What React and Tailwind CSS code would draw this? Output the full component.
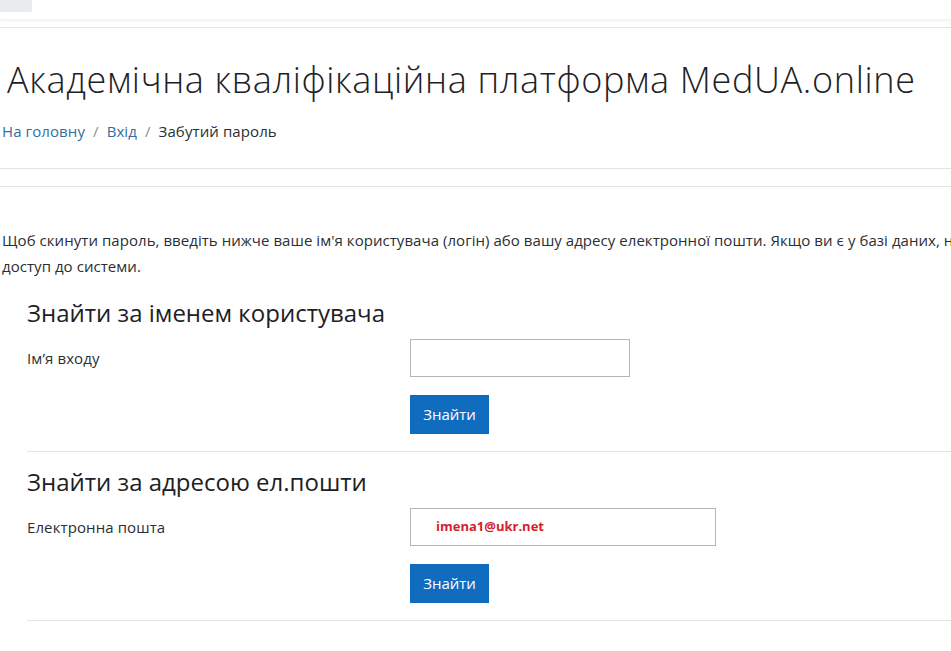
export default function App() {
  return (
    <div className="w-[951px] h-[651px] overflow-hidden bg-white text-[#373a3c]" style={{ fontFamily: '"Open Sans", "Noto Sans", sans-serif' }}>
      {/* top navbar, cut off */}
      <div className="h-[19px] bg-white shadow-[0_2px_3px_rgba(0,0,0,0.06)] flex">
        <div className="w-[32px] h-[12px] bg-[#e9ecef] rounded-br-[2px]" />
      </div>
      <div className="mt-[8px] border-t border-[#e5e5e5]" />

      {/* header */}
      <h1 className="mt-[30px] pl-[7px] text-[36px] leading-[44px] font-light tracking-[0.65px] text-[#1d2125] whitespace-nowrap">
        Академічна кваліфікаційна платформа MedUA.online
      </h1>
      <nav className="mt-[19px] pl-[2px] flex items-center gap-[8px] text-[15px] leading-[20px] tracking-[0.1px] whitespace-nowrap">
        <a className="text-[#2f6fa3]">На головну</a>
        <span className="text-[#8a8f94]">/</span>
        <a className="text-[#2f6fa3]">Вхід</a>
        <span className="text-[#8a8f94]">/</span>
        <span className="text-[#2b2f33]">Забутий пароль</span>
      </nav>
      <div className="mt-[27px] border-t border-[#e3e3e3]" />
      <div className="mt-[17px] border-t border-[#e3e3e3]" />

      {/* intro */}
      <p className="mt-[40px] pl-[2px] text-[15px] leading-[26px] tracking-[0.05px] text-[#2b2f33] w-[1000px]">
        Щоб скинути пароль, введіть нижче ваше ім'я користувача (логін) або вашу адресу електронної пошти. Якщо ви є у базі даних, н
        <br />
        доступ до системи.
      </p>

      {/* by username */}
      <section className="pl-[27px]">
        <h3 className="mt-[19px] text-[24px] leading-[30px] text-[#1d2125]">Знайти за іменем користувача</h3>
        <div className="mt-[11px] flex items-center">
          <label className="w-[383px] text-[15px] tracking-[0.1px] text-[#2b2f33]">Ім’я входу</label>
          <input className="w-[220px] h-[38px] border border-[#b5b5b5] outline-none" />
        </div>
        <div className="mt-[18px] pl-[383px]">
          <button className="w-[79px] h-[39px] bg-[#0f6cbf] text-white text-[15px]">Знайти</button>
        </div>
        <div className="mt-[17px] border-t border-[#e3e3e3]" />
      </section>

      {/* by email */}
      <section className="pl-[27px]">
        <h3 className="mt-[15px] text-[24px] leading-[30px] text-[#1d2125]">Знайти за адресою ел.пошти</h3>
        <div className="mt-[11px] flex items-center">
          <label className="w-[383px] text-[15px] tracking-[0.1px] text-[#2b2f33]">Електронна пошта</label>
          <div className="w-[306px] h-[38px] border border-[#b5b5b5] flex items-center pl-[25px]">
            <span className="text-[13px] font-bold text-[#d21f2b]">imena1@ukr.net</span>
          </div>
        </div>
        <div className="mt-[18px] pl-[383px]">
          <button className="w-[79px] h-[39px] bg-[#0f6cbf] text-white text-[15px]">Знайти</button>
        </div>
        <div className="mt-[17px] border-t border-[#e3e3e3]" />
      </section>
    </div>
  )
}
